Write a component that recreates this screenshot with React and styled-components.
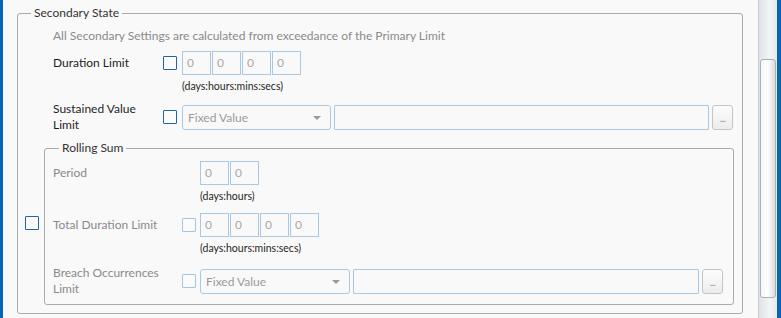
import styled, { createGlobalStyle } from 'styled-components';

const GlobalStyles = createGlobalStyle`
    html, body {
        margin: 0;
        padding: 0;
        background: #f9f9f9;
    }
    body {
        font-family: 'Segoe UI', Lato, 'Liberation Sans', sans-serif;
        font-size: 12px;
        color: #1e1e1e;
    }
`;

const App = () => {
    return (
        <>
            <GlobalStyles />
            <Page>
                <EdgeBar />
                <Content>
                    <GroupBox>
                        <Legend>Secondary State</Legend>
                        <UpperBlock>
                            <Note>
                                All Secondary Settings are calculated from
                                exceedance of the Primary Limit
                            </Note>
                            <FieldRow $labelWidth={105} $gap={5} $top={7}>
                                <Label>Duration Limit</Label>
                                <CheckBox />
                                <TimeFields count={4} />
                                <Hint>(days:hours:mins:secs)</Hint>
                            </FieldRow>
                            <FieldRow $labelWidth={105} $gap={5} $top={8}>
                                <Label>Sustained Value Limit</Label>
                                <CheckBox />
                                <ValueFields />
                            </FieldRow>
                        </UpperBlock>
                        <RollingRow>
                            <CheckBox />
                            <InnerGroupBox>
                                <Legend>Rolling Sum</Legend>
                                <FieldRow $labelWidth={125} $gap={4} $top={0}>
                                    <Label $muted>Period</Label>
                                    <span />
                                    <TimeFields count={2} />
                                    <Hint>(days:hours)</Hint>
                                </FieldRow>
                                <FieldRow $labelWidth={125} $gap={4} $top={10}>
                                    <Label $muted>Total Duration Limit</Label>
                                    <CheckBox $disabled />
                                    <TimeFields count={4} />
                                    <Hint>(days:hours:mins:secs)</Hint>
                                </FieldRow>
                                <FieldRow $labelWidth={125} $gap={4} $top={10}>
                                    <Label $muted>
                                        Breach Occurrences Limit
                                    </Label>
                                    <CheckBox $disabled />
                                    <ValueFields wide />
                                </FieldRow>
                            </InnerGroupBox>
                        </RollingRow>
                    </GroupBox>
                </Content>
                <ScrollTrack>
                    <ScrollThumb />
                </ScrollTrack>
                <EdgeBar $right />
            </Page>
        </>
    );
};

const TimeFields = ({ count }) => (
    <TimeGroup>
        {Array.from({ length: count }).map((_, i) => (
            <TimeBox key={i}>0</TimeBox>
        ))}
    </TimeGroup>
);

const ValueFields = ({ wide }) => (
    <ValueGroup>
        <Select $wide={wide}>
            Fixed Value
            <Arrow />
        </Select>
        <TextField />
        <BrowseButton>
            <Dots>...</Dots>
        </BrowseButton>
    </ValueGroup>
);

export default App;

const Page = styled.div`
    display: flex;
    width: 781px;
    height: 318px;
    overflow: hidden;
    background: #f9f9f9;
`;

const EdgeBar = styled.div`
    flex: 0 0 ${({ $right }) => ($right ? 4 : 3)}px;
    background: #0a64b4;
`;

const Content = styled.div`
    flex: 1;
    padding: 5px 15px 0 14px;
`;

const GroupBox = styled.fieldset`
    margin: 0;
    min-width: 0;
    height: 309px;
    box-sizing: border-box;
    border: 1px solid #ababab;
    border-radius: 3px;
    padding: 7px 8px 7px 7px;
`;

const InnerGroupBox = styled(GroupBox)`
    height: auto;
    padding: 5px 10px 7px 8px;
`;

const Legend = styled.legend`
    margin-left: 6px;
    padding: 0 3px;
    line-height: 16px;
    color: #333;
`;

const UpperBlock = styled.div`
    padding-left: 28px;
    padding-right: 1px;
`;

const Note = styled.div`
    line-height: 16px;
    color: #8a8a8a;
`;

const FieldRow = styled.div`
    display: grid;
    grid-template-columns: ${({ $labelWidth }) => $labelWidth}px 14px 1fr;
    column-gap: ${({ $gap }) => $gap}px;
    align-items: center;
    margin-top: ${({ $top }) => $top}px;
`;

const Label = styled.div`
    line-height: 16px;
    color: ${({ $muted }) => ($muted ? '#8a8a8a' : '#1e1e1e')};
`;

const CheckBox = styled.div`
    width: 14px;
    height: 14px;
    box-sizing: border-box;
    border: 1px solid ${({ $disabled }) => ($disabled ? '#a6c4de' : '#1f63a8')};
    border-radius: 1px;
    background: #fbfbfb;
`;

const TimeGroup = styled.div`
    display: flex;
    gap: 1px;
`;

const TimeBox = styled.div`
    width: 29px;
    height: 24px;
    box-sizing: border-box;
    border: 1px solid #a9c8e2;
    padding-left: 4px;
    line-height: 22px;
    color: #a8a8a8;
`;

const Hint = styled.div`
    grid-column: 3;
    margin-top: 4px;
    font-size: 10.5px;
    line-height: 14px;
    color: #1e1e1e;
`;

const ValueGroup = styled.div`
    display: flex;
    gap: 3px;
    height: 25px;
`;

const Select = styled.div`
    position: relative;
    width: ${({ $wide }) => ($wide ? 150 : 149)}px;
    box-sizing: border-box;
    border: 1px solid #a9c8e2;
    border-radius: 3px;
    padding-left: 5px;
    line-height: 23px;
    color: #9a9a9a;
`;

const Arrow = styled.span`
    position: absolute;
    right: 9px;
    top: 10px;
    border-left: 4px solid transparent;
    border-right: 4px solid transparent;
    border-top: 4px solid #9a9a9a;
`;

const TextField = styled.div`
    flex: 1;
    box-sizing: border-box;
    border: 1px solid #a9c8e2;
    border-radius: 1px;
`;

const BrowseButton = styled.div`
    width: 21px;
    box-sizing: border-box;
    border: 1px solid #c4c4c4;
    border-radius: 3px;
    background: linear-gradient(#fdfdfd, #ececec);
    text-align: center;
`;

const Dots = styled.span`
    font-size: 10px;
    line-height: 25px;
    letter-spacing: -0.5px;
    color: #8a8a9a;
`;

const RollingRow = styled.div`
    display: grid;
    grid-template-columns: 14px 1fr;
    column-gap: 5px;
    align-items: center;
    margin-top: 7px;
`;

const ScrollTrack = styled.div`
    flex: 0 0 19px;
    box-sizing: border-box;
    border-left: 1px solid #c6ccd2;
    background: linear-gradient(90deg, #dfe3e7, #f2f4f6 60%, #e6e9ec);
    padding: 59px 1px 0 1px;
`;

const ScrollThumb = styled.div`
    height: 239px;
    box-sizing: border-box;
    border: 1px solid #a9b1b9;
    border-radius: 3px;
    background: linear-gradient(90deg, #f4f5f6, #ffffff 45%, #d9dde1);
`;
